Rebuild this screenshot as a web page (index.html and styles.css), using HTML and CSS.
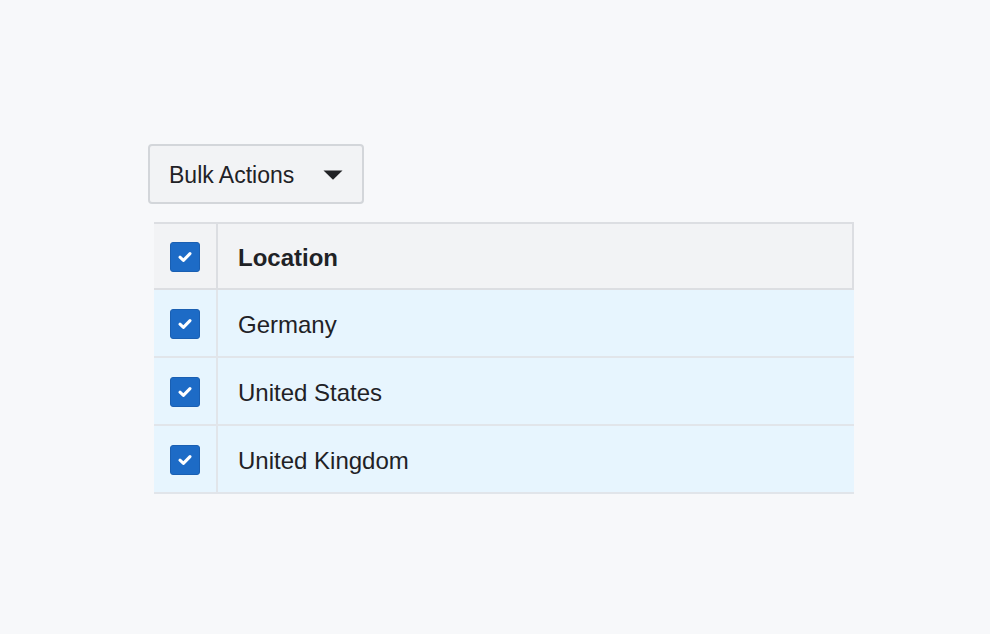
FILE: index.html
```html
<!DOCTYPE html>
<html lang="en">
<head>
<meta charset="utf-8">
<title>Bulk Actions</title>
<link rel="stylesheet" href="styles.css">
</head>
<body>
<div class="page">
  <button class="bulk-btn" type="button">
    <span class="bulk-label">Bulk Actions</span>
    <svg class="caret" width="20" height="10" viewBox="0 0 20 10"><path d="M0.5 0.5 H19.5 L10 9.8 Z" fill="#222326"/></svg>
  </button>
  <div class="table">
    <div class="row head">
      <div class="cell-check"><span class="cb"><svg width="14" height="12" viewBox="0 0 14 12"><path d="M2 6.2 L5.4 9.4 L12 2.6" fill="none" stroke="#fff" stroke-width="3" stroke-linecap="round" stroke-linejoin="round"/></svg></span></div>
      <div class="cell-text">Location</div>
    </div>
    <div class="row sel">
      <div class="cell-check"><span class="cb"><svg width="14" height="12" viewBox="0 0 14 12"><path d="M2 6.2 L5.4 9.4 L12 2.6" fill="none" stroke="#fff" stroke-width="3" stroke-linecap="round" stroke-linejoin="round"/></svg></span></div>
      <div class="cell-text">Germany</div>
    </div>
    <div class="row sel">
      <div class="cell-check"><span class="cb"><svg width="14" height="12" viewBox="0 0 14 12"><path d="M2 6.2 L5.4 9.4 L12 2.6" fill="none" stroke="#fff" stroke-width="3" stroke-linecap="round" stroke-linejoin="round"/></svg></span></div>
      <div class="cell-text">United States</div>
    </div>
    <div class="row sel">
      <div class="cell-check"><span class="cb"><svg width="14" height="12" viewBox="0 0 14 12"><path d="M2 6.2 L5.4 9.4 L12 2.6" fill="none" stroke="#fff" stroke-width="3" stroke-linecap="round" stroke-linejoin="round"/></svg></span></div>
      <div class="cell-text">United Kingdom</div>
    </div>
  </div>
</div>
</body>
</html>
```

FILE: styles.css
```css
* { box-sizing: border-box; }
html, body { margin: 0; padding: 0; }
body {
  background: #f7f8fa;
  font-family: "Liberation Sans", Arial, sans-serif;
  color: #1f2226;
  width: 990px;
  height: 634px;
  overflow: hidden;
}
.page {
  padding: 144px 0 0 148px;
}
.bulk-btn {
  display: flex;
  align-items: center;
  width: 216px;
  height: 60px;
  padding: 0 19px 0 19px;
  background: #f2f3f5;
  border: 2px solid #d3d6da;
  border-radius: 4px;
  font-family: inherit;
  font-size: 23px;
  color: #1f2226;
  justify-content: space-between;
}
.bulk-label { line-height: 1; padding-top: 3px; }
.caret { display: block; margin-top: 1px; }
.table {
  margin: 18px 0 0 6px;
  width: 700px;
}
.row {
  display: flex;
  border-bottom: 2px solid #e1e5ea;
}
.row.head {
  background: #f2f3f5;
  border-top: 2px solid #dcdee2;
  border-right: 2px solid #dcdee2;
  border-bottom: 2px solid #dcdee2;
  height: 68px;
}
.row.sel {
  background: #e7f5fe;
  height: 68px;
}
.cell-check {
  width: 64px;
  flex: none;
  border-right: 2px solid #e1e5ea;
  display: flex;
  align-items: center;
  padding: 2px 0 0 16px;
}
.head .cell-check { border-right-color: #dcdee2; }
.cb {
  width: 30px;
  height: 30px;
  border-radius: 3px;
  background: #1d6bc6;
  border: 1px solid #1a5fb2;
  display: flex;
  align-items: center;
  justify-content: center;
}
.cb svg { display: block; }
.cell-text {
  display: flex;
  align-items: center;
  padding: 4px 0 0 20px;
  font-size: 24px;
}
.head .cell-text { font-weight: bold; }
```
